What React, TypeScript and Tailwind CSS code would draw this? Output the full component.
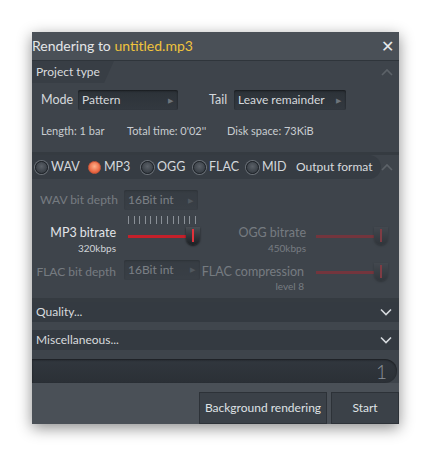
import React from 'react';

const font = { fontFamily: 'Lato, "Noto Sans", sans-serif' };

function Dropdown({ label, w, dim = false }: { label: string; w: string; dim?: boolean }) {
  return (
    <div
      className={`${w} h-[20px] flex items-center justify-between pl-[4px] pr-[5px] rounded-[2px] bg-gradient-to-b from-[#2c3238] to-[#333940] shadow-[inset_0_1px_2px_rgba(0,0,0,0.5)] ${dim ? 'opacity-40' : ''}`}
    >
      <span className="text-[12px] text-[#d6d9dc] whitespace-nowrap">{label}</span>
      <span className="text-[7px] text-[#6d747b]">▶</span>
    </div>
  );
}

function Radio({ label, w, on = false }: { label: string; w: string; on?: boolean }) {
  return (
    <div className={`${w} flex items-center gap-[3px]`}>
      <span
        className={`w-[13px] h-[13px] rounded-full border-[1.5px] ${
          on
            ? 'border-[#c9573a] bg-[radial-gradient(circle_at_50%_40%,#ffb08a,#e7623e_70%)]'
            : 'border-[#1f2429] bg-[radial-gradient(circle_at_50%_40%,#5b6168,#3a4047_70%)] shadow-[0_0_0_1px_#6a7077]'
        }`}
      />
      <span className="text-[12.5px] text-[#d4d8dc] whitespace-nowrap">{label}</span>
    </div>
  );
}

function Slider({ dim = false, ticks = false }: { dim?: boolean; ticks?: boolean }) {
  return (
    <div className={`relative w-[72px] h-[22px] ${dim ? 'opacity-40' : ''}`}>
      {ticks && (
        <div className="absolute left-0 top-[-10px] w-[68px] h-[8px] flex justify-between">
          {Array.from({ length: 13 }).map((_, i) => (
            <span key={i} className="w-px h-full bg-[#8a9097]" />
          ))}
        </div>
      )}
      <div className="absolute left-0 top-[9px] w-[64px] h-[3px] bg-[#c4202a]" />
      <div className="absolute left-[58px] top-[1px] w-[14px] h-[18px] rounded-b-full rounded-t-[5px] bg-gradient-to-b from-[#4a4f55] to-[#1c2024] shadow-[0_1px_2px_rgba(0,0,0,0.6)] flex justify-center">
        <span className="w-[2px] h-[13px] mt-[2px] bg-[#e0323b]" />
      </div>
    </div>
  );
}

function Chevron({ up = false }: { up?: boolean }) {
  return (
    <svg width="12" height="8" viewBox="0 0 12 8" className={up ? 'opacity-20' : ''}>
      <path
        d={up ? 'M1 7l5-5 5 5' : 'M1 1.5l5 5 5-5'}
        fill="none"
        stroke="#d5d9dd"
        strokeWidth="1.6"
      />
    </svg>
  );
}

export default function App() {
  return (
    <div className="w-[431px] h-[457px] bg-white pt-[32px] pl-[32px]" style={font}>
      <div className="w-[367px] h-[392px] flex flex-col bg-[#3e444b] shadow-[0_4px_14px_rgba(0,0,0,0.45)]">
        {/* Title */}
        <div className="h-[28px] flex items-center justify-between bg-[#4a5057] pr-[5px]">
          <span className="text-[14px] text-[#e4e6e8] leading-none whitespace-nowrap">
            Rendering to <span className="text-[#f0c33c]">untitled.mp3</span>
          </span>
          <span className="text-[16px] text-[#e8eaec] leading-none">✕</span>
        </div>

        {/* Project type */}
        <div className="h-[92px] flex flex-col border-t border-[#2f353b]">
          <div className="h-[22px] flex items-center justify-between pr-[6px]">
            <div className="h-full flex items-center pl-[4px] pr-[14px] bg-[#383e45] [clip-path:polygon(0_0,100%_0,88%_100%,0_100%)]">
              <span className="text-[12px] text-[#d8dbde] whitespace-nowrap">Project type</span>
            </div>
            <Chevron up />
          </div>
          <div className="flex items-center mt-[7px] pl-[9px]">
            <span className="text-[12.5px] text-[#d4d8dc] w-[37px]">Mode</span>
            <Dropdown label="Pattern" w="w-[100px]" />
            <span className="text-[12.5px] text-[#d4d8dc] ml-[31px] w-[25px]">Tail</span>
            <Dropdown label="Leave remainder" w="w-[112px]" />
          </div>
          <div className="flex items-center mt-[13px] pl-[9px] text-[11px] text-[#c9cdd1] whitespace-nowrap">
            <span className="w-[86px]">Length: 1 bar</span>
            <span className="w-[100px]">Total time: 0'02''</span>
            <span>Disk space: 73KiB</span>
          </div>
        </div>

        {/* Output format */}
        <div className="flex-1 flex flex-col border-t-[3px] border-[#353b41]">
          <div className="h-[24px] flex items-center justify-between pr-[6px]">
            <div className="h-full flex items-center pl-[3px] pr-[8px] bg-[#363c43] rounded-r-full">
              <Radio label="WAV" w="w-[53px]" />
              <Radio label="MP3" w="w-[53px]" on />
              <Radio label="OGG" w="w-[52px]" />
              <Radio label="FLAC" w="w-[53px]" />
              <Radio label="MID" w="w-[50px]" />
              <span className="text-[12px] text-[#d8dbde] whitespace-nowrap">Output format</span>
            </div>
            <Chevron up />
          </div>

          <div className="flex items-center mt-[11px] pl-[8px] opacity-40">
            <span className="w-[84px] text-[12px] text-[#c9cdd1] whitespace-nowrap">WAV bit depth</span>
            <Dropdown label="16Bit int" w="w-[74px]" />
          </div>

          <div className="flex items-start mt-[17px]">
            <div className="w-[84px] flex flex-col items-end leading-none">
              <span className="text-[12.5px] text-[#e2e5e8] whitespace-nowrap">MP3 bitrate</span>
              <span className="text-[10px] text-[#d0d4d8] mt-[3px]">320kbps</span>
            </div>
            <div className="ml-[12px] -mt-[1px]">
              <Slider ticks />
            </div>
            <div className="w-[106px] flex flex-col items-end leading-none opacity-40">
              <span className="text-[12.5px] text-[#c9cdd1] whitespace-nowrap">OGG bitrate</span>
              <span className="text-[10px] text-[#c9cdd1] mt-[3px]">450kbps</span>
            </div>
            <div className="ml-[10px] -mt-[1px]">
              <Slider dim />
            </div>
          </div>

          <div className="flex items-start mt-[11px]">
            <div className="w-[84px] flex justify-end opacity-40 pt-[2px]">
              <span className="text-[12px] text-[#c9cdd1] leading-none whitespace-nowrap">FLAC bit depth</span>
            </div>
            <div className="ml-[8px] -mt-[4px]">
              <Dropdown label="16Bit int" w="w-[76px]" dim />
            </div>
            <div className="w-[104px] flex flex-col items-end leading-none opacity-40 pt-[2px]">
              <span className="text-[12.5px] text-[#c9cdd1] whitespace-nowrap">FLAC compression</span>
              <span className="text-[10px] text-[#c9cdd1] mt-[3px]">level 8</span>
            </div>
            <div className="ml-[12px] -mt-[2px]">
              <Slider dim />
            </div>
          </div>
        </div>

        {/* Collapsed sections */}
        <div className="border-t-[4px] border-[#353b41]">
          <div className="h-[20px] flex items-center justify-between pl-[4px] pr-[7px] bg-[#343a41]">
            <span className="text-[12px] text-[#d8dbde]">Quality...</span>
            <Chevron />
          </div>
          <div className="h-[8px] bg-[#40464d]" />
          <div className="h-[20px] flex items-center justify-between pl-[4px] pr-[7px] bg-[#343a41]">
            <span className="text-[12px] text-[#d8dbde]">Miscellaneous...</span>
            <Chevron />
          </div>
          <div className="h-[9px]" />
        </div>

        {/* Progress */}
        <div className="h-[24px] mr-[2px] flex items-center justify-end pr-[10px] rounded-l-[8px] rounded-r-full bg-gradient-to-b from-[#31373e] to-[#2b3036] shadow-[inset_0_1px_2px_rgba(0,0,0,0.5)]">
          <span className="text-[19px] font-light text-[#8a9198] leading-none">1</span>
        </div>

        {/* Buttons */}
        <div className="flex-none h-[41px] flex items-end justify-end gap-[4px] bg-[#4a5057] pt-[9px]">
          <button className="h-[32px] w-[128px] bg-[#3b4148] border border-[#2d3238] text-[12px] text-[#dfe2e5] whitespace-nowrap">
            Background rendering
          </button>
          <button className="h-[32px] w-[68px] bg-[#3b4148] border border-[#2d3238] text-[12px] text-[#dfe2e5]">
            Start
          </button>
        </div>
      </div>
    </div>
  );
}
